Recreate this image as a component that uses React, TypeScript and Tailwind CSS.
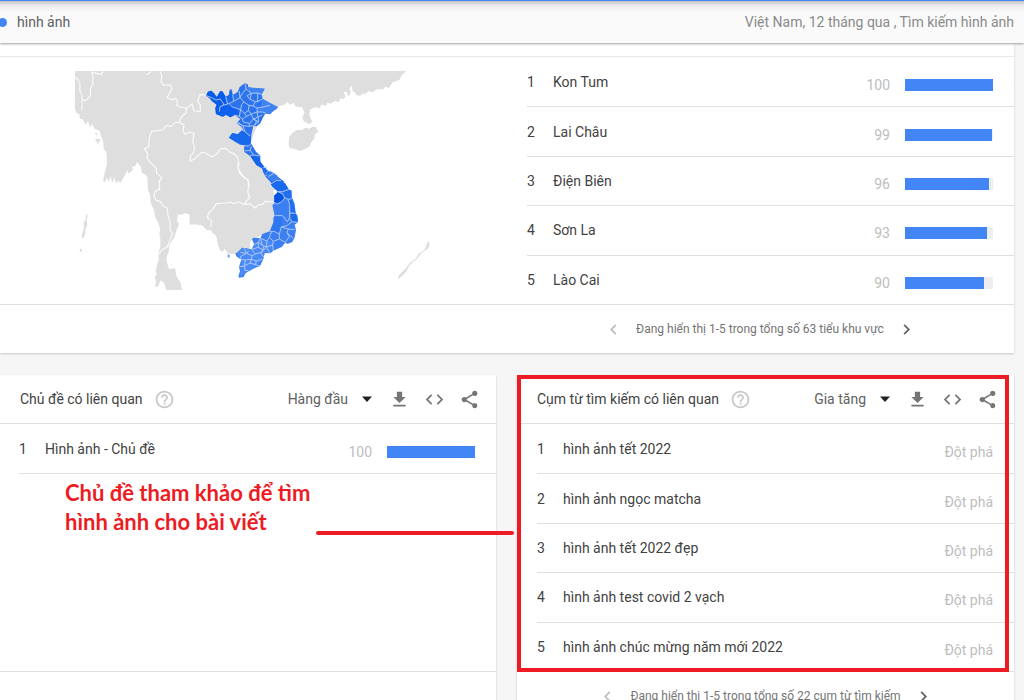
import { useId, type ReactNode } from "react";

const subregions = [
  { name: "Kon Tum", value: 100 },
  { name: "Lai Châu", value: 99 },
  { name: "Điện Biên", value: 96 },
  { name: "Sơn La", value: 93 },
  { name: "Lào Cai", value: 90 },
];

const topics = [{ name: "Hình ảnh - Chủ đề", value: 100 }];

const queries = [
  "hình ảnh tết 2022",
  "hình ảnh ngọc matcha",
  "hình ảnh tết 2022 đẹp",
  "hình ảnh test covid 2 vạch",
  "hình ảnh chúc mừng năm mới 2022",
];

const Icon = ({ d, className = "size-[21px]" }: { d: string; className?: string }) => (
  <svg viewBox="0 0 24 24" className={className} fill="currentColor" aria-hidden="true">
    <path d={d} />
  </svg>
);

const icons = {
  help: "M11 18h2v-2h-2v2zm1-16C6.48 2 2 6.48 2 12s4.48 10 10 10 10-4.48 10-10S17.52 2 12 2zm0 18c-4.41 0-8-3.59-8-8s3.59-8 8-8 8 3.59 8 8-3.59 8-8 8zm0-14c-2.21 0-4 1.79-4 4h2c0-1.1.9-2 2-2s2 .9 2 2c0 2-3 1.75-3 5h2c0-2.25 3-2.5 3-5 0-2.21-1.79-4-4-4z",
  caret: "M7 9.5l5 5.5 5-5.5z",
  download: "M19 9h-4V3H9v6H5l7 7 7-7zM5 18v2h14v-2H5z",
  code: "M9.4 16.6L4.8 12l4.6-4.6L8 6l-6 6 6 6 1.4-1.4zm5.2 0l4.6-4.6-4.6-4.6L16 6l6 6-6 6-1.4-1.4z",
  share:
    "M18 16.08c-.76 0-1.44.3-1.96.77L8.91 12.7c.05-.23.09-.46.09-.7s-.04-.47-.09-.7l7.05-4.11c.54.5 1.25.81 2.04.81 1.66 0 3-1.34 3-3s-1.34-3-3-3-3 1.34-3 3c0 .24.04.47.09.7L8.04 9.81C7.5 9.31 6.79 9 6 9c-1.66 0-3 1.34-3 3s1.34 3 3 3c.79 0 1.5-.31 2.04-.81l7.12 4.16c-.05.21-.08.43-.08.65 0 1.61 1.31 2.92 2.92 2.92 1.61 0 2.92-1.31 2.92-2.92s-1.31-2.92-2.92-2.92z",
  prev: "M15.41 7.41L14 6l-6 6 6 6 1.41-1.41L10.83 12z",
  next: "M10 6L8.59 7.41 13.17 12l-4.58 4.59L10 18l6-6z",
};

// Geo map: neighbours in grey, provinces shaded by interest
const VietnamMap = () => (
  <svg
    viewBox="0 0 1065 657"
    className="h-[219px] w-[355px]"
    role="img"
    aria-label="Việt Nam"
    strokeLinejoin="round"
  >
    <g fill="#dedede">
      {/* Myanmar, Laos, north Thailand */}
      <path
        transform="translate(-45 -33)"
        d="M45 33H571V391H267L266 362L258 345L246 338L242 320L231 306L226 318L216 320L219 330L205 341L203 330L192 350L182 368L174 362L168 371L163 350L158 369L151 349L146 366L140 352L136 367L129 362L134 338L141 312L140 280L131 265L129 243L122 225L118 211L104 207L96 191L90 204L84 183L78 194L68 178L60 176L58 162L50 160L45 148ZM103 219L115 222L110 226ZM105 236L122 238L114 253Z"
      />
      {/* South China coast with Leizhou and Hainan */}
      <path
        transform="translate(495 -33)"
        d="M-2 33H498L484 47L478 60L458 67L447 84L436 80L430 88L411 88L398 97L385 94L376 102L366 101L361 107L349 106L344 97L338 94L334 77L329 84L332 98L325 110L320 95L311 96L317 110L309 118L301 114L297 127L286 122L272 131L262 128L258 137L244 134L239 145L226 142L211 148L208 162L211 174L217 185L209 193L191 184L187 171L194 158L186 142L168 140L160 129L150 134L142 126L132 135L116 139L76 164L50 200L30 250L64 315L144 391H-2ZM147 232L158 218L172 209L184 211L196 203L208 206L218 200L228 201L235 216L226 221L222 237L213 248L210 258L196 267L179 273L165 267L150 265L146 256Z"
      />
      {/* Thailand gulf and the Malay peninsula */}
      <path
        transform="translate(-45 327)"
        d="M262 -2H571V205L553 204L547 214L526 221L510 213L497 214L493 197L483 205L475 200L470 175L469 163L459 160L455 149L441 151L426 136L404 133L389 134L388 103L373 100L366 104L353 104L351 123L357 132L349 153L343 172L328 195L326 216L319 233L322 251L327 267L345 265L350 290L362 308L366 330H318L315 313L306 303L300 302L295 319L286 322L288 302L284 292L290 283L287 271L296 240L296 220L301 199L301 178L298 158L301 150L296 131L285 110L282 91L272 68L270 43L264 30Z"
      />
      <path
        transform="translate(405 297)"
        d="M-2 -2H152L186 45L197 92L190 180L130 207L80 251L53 251L47 232L38 246L29 240L25 226L20 199L8 189L-2 175Z"
      />
      {/* Andaman islands and Palawan */}
      <path
        transform="translate(-45 327)"
        d="M78 102L83 107L80 120L82 134L76 149L75 164L70 175L65 172L68 155L72 144L71 128L77 118ZM60 207L66 206L65 216L59 217Z"
      />
      <path d="M1060 508L1064 522L1058 534L1040 545L1028 562L1013 574L1003 584L993 603L968 626L972 612L993 591L1005 575L1023 562L1030 549L1048 537Z" />
    </g>

    {/* National borders */}
    <g fill="none" stroke="#fafafa" strokeWidth="3.5">
      <path
        transform="translate(-45 -33)"
        d="M45 50L53 58L60 72L59 91L66 104L66 150M95 34L99 50L98 72L91 88L92 106L78 122L66 119M98 38L124 44L130 34M260 44L275 34M301 34L305 49L303 66L312 76L332 75L336 86L327 102L321 113L336 119L346 116L353 124L350 136L360 141L380 145L396 131L402 153L421 154L421 136L413 123L420 104L439 105M380 145L378 160L364 170L357 187L345 188L333 199L318 197L309 210L275 214L268 233L266 261L253 266L263 280L261 294L272 308L289 326L290 340L306 353L298 364L299 391M357 187L372 195L369 213L376 223L387 216L402 220L398 245L404 263L401 276L392 288L390 304L405 296L424 277L437 279L455 291L473 280L480 267L496 265L511 277L522 281L533 292L537 313L533 324L548 347L564 360L568 378"
      />
      <path
        transform="translate(-45 327)"
        d="M299 0L298 27L284 36L282 46L288 61L302 65L307 76L321 84L325 111L331 128L330 148L337 163L328 185L322 200L305 210L298 222"
      />
      <path
        transform="translate(405 297)"
        d="M83 -20L88 9L99 20L114 30L116 50L113 66L119 84L108 94L105 104L84 96L72 101L59 96L49 99L20 101L8 118L-4 129L-8 142L5 154L2 172M105 104L120 101L135 114L148 103L158 104L165 94L190 96"
      />
    </g>

    {/* Northern provinces */}
    <g transform="translate(345 12)">
      <path
        fill="#2b74ee"
        d="M48 62L54 50L64 47L73 55L80 66L88 62L90 49L97 49L107 65L117 60L120 43L126 44L128 60L143 51L149 36L165 24L173 28L175 37L187 39L196 46L203 40L224 41L215 58L218 72L233 80L240 91L264 96L257 104L243 109L240 118L226 114L218 130L211 145L200 154L190 152L184 180L183 205L198 230L211 242L211 260L233 289L257 300L285 322L244 324L225 303L216 280L199 270L180 243L162 230L163 211L150 209L137 201L117 188L127 174L143 178L160 170L157 158L140 144L151 132L134 120L121 127L108 119L99 125L78 117L76 99L80 89L65 79L59 70Z"
      />
      <path fill="#0b5beb" d="M48 62L54 50L64 47L80 66L90 49L97 49L107 65L111 85L99 91L90 112L98 125L78 117L76 99L80 89L59 70Z" />
      <path fill="#0f60ec" d="M99 91L119 88L127 96L143 101L148 124L134 120L121 127L108 119L99 125L88 110Z" />
      <path fill="#186aec" d="M107 65L117 60L120 43L128 60L131 79L113 87Z" />
      <path fill="#1968ec" d="M117 188L127 174L143 178L156 165L182 185L183 205L163 211L137 201Z" />
      <path fill="#1665ec" d="M180 240L209 244L211 260L233 289L222 296L216 280L199 270Z" />
      <path fill="#4283f2" d="M165 24L175 37L224 41L215 58L180 56ZM218 72L264 96L240 118L200 110L213 95ZM239 288L264 303L244 316L232 306Z" />
      <path
        fill="none"
        stroke="#bcd0f7"
        strokeWidth="2.6"
        d="M48 62L65 68L78 75L91 72L101 87L99 91L90 95L88 110M107 65L113 87L99 91M113 87L131 79L128 60M131 79L150 68L162 81L155 88L152 104L127 96L119 88M150 68L148 48M165 24L168 42L156 57L150 68M168 42L184 55L180 73L196 80L189 93L177 91L162 81M180 73L171 62L184 55L203 54L215 58M203 54L203 80L196 80M203 80L218 72M189 93L202 99L219 96L240 91M202 99L201 111L218 111L226 114M177 91L175 107L184 117L201 111M175 107L163 115L152 104L148 124L134 120M163 115L170 124L184 117L190 132L204 126L201 111M170 124L157 132L148 124M157 132L160 141L179 145L190 132L206 141L204 126L217 120M179 145L177 154L157 152L140 139M177 154L190 152L206 141M190 132L199 137L196 149M141 142L160 154L164 169L180 183M164 169L156 165M161 211L175 214L183 205M163 228L181 226L190 240L209 243M181 226L184 213M180 243L190 240M216 280L229 276L233 289M225 303L236 298L241 287L257 300M236 298L247 315L264 307"
      />
    </g>

    {/* Central coast and Mekong delta */}
    <g transform="translate(405 297)">
      <path
        fill="#3b7ff1"
        d="M154 -8L175 3L192 9L206 25L213 32L226 41L236 58L244 62L245 80L254 101L257 130L263 137L264 157L254 164L258 180L254 202L247 216L234 221L225 219L215 231L190 242L181 250L164 249L159 269L150 288L134 294L115 302L107 309L101 321L88 323L85 319L90 304L87 290L94 269L79 259L76 250L91 247L96 233L125 238L133 224L126 208L130 203L151 205L157 192L179 184L190 157L190 143L194 137L187 106L196 97L192 77L202 68L204 59L189 52L182 42L188 34L171 18Z"
      />
      <path fill="#4a8af4" d="M79 250L96 233L125 238L135 216L152 211L190 214L188 240L164 249L159 269L134 294L107 309L88 323L94 269Z" />
      <path fill="#196aec" d="M182 42L189 33L210 31L226 41L236 58L218 65L204 65L189 52ZM154 -8L175 3L178 12L168 10ZM244 132L257 130L264 157L246 154Z" />
      <path fill="#0454e6" d="M193 77L204 65L218 72L224 84L215 95L201 102L192 97Z" />
      <path fill="#216eee" d="M218 65L244 60L245 86L230 88L222 80ZM235 88L247 87L257 130L243 130Z" />
      <path fill="#2f77ee" d="M194 137L218 137L216 160L208 192L192 184L181 185L192 160Z" />
      <path fill="#5b95f5" d="M53 254L59 254L58 263L53 262Z" />
      <path
        fill="none"
        stroke="#bcd0f7"
        strokeWidth="2.6"
        d="M168 10L175 3M175 20L193 9M182 42L200 31L213 32M204 65L218 65L236 58M204 65L218 72L224 84L215 95L201 102L192 97M222 82L234 88L246 86M234 88L239 104L239 129L257 130M239 129L238 145L232 155L218 137L196 137M238 145L246 155L264 157M246 155L231 167L214 171L208 192L192 184L179 184M214 171L235 177L254 179M235 177L231 188L249 205M231 188L238 200L226 217M208 192L208 207L226 217M208 207L190 214L178 202L185 184M190 214L188 225L190 242M178 202L171 213L151 205M171 213L169 231L188 225M169 231L179 249M151 205L145 217L158 226L169 231L161 241L145 232L145 217L133 224M145 232L125 238L136 252L151 248L161 241M151 248L162 262M136 252L126 257L109 250L103 235M109 250L91 260L94 269M126 257L124 268L106 270L94 269M124 268L139 273L157 267M139 273L136 284L150 288M106 270L103 288L120 279L136 284M103 288L105 301L115 302M103 288L88 290M120 279L124 268M91 247L109 250M116 242L110 250M157 226L152 205M162 229L154 250"
      />
    </g>
  </svg>
);

const InterestBar = ({ value }: { value: number }) => (
  <div className="flex items-center gap-[15px] pt-1.5">
    <span className="text-[#bdbdbd]">{value}</span>
    <div className="h-3 w-[88px] bg-[#eeeeee]">
      <div className="h-full bg-[#4285f4]" style={{ width: `${value}%` }} />
    </div>
  </div>
);

const RankedRow = ({ rank, name, children }: { rank: number; name: string; children: ReactNode }) => (
  <li className="flex items-center border-b border-[#e0e0e0] pr-[21px]">
    <span className="w-[26px]">{rank}</span>
    <span className="flex-1">{name}</span>
    {children}
  </li>
);

const Pager = ({ label }: { label: string }) => (
  <div className="flex h-12 items-center justify-center gap-3 text-xs text-[#757575]">
    <button type="button" aria-label="Trang trước" disabled className="text-[#bdbdbd]">
      <Icon d={icons.prev} />
    </button>
    <span>{label}</span>
    <button type="button" aria-label="Trang sau" className="text-[#616161]">
      <Icon d={icons.next} />
    </button>
  </div>
);

const WidgetHeader = ({ title, options }: { title: string; options: string[] }) => {
  const id = useId();

  return (
    <div className="flex h-[49px] items-center border-b border-[#e0e0e0] pr-4 pl-5">
      <h2>
        <label htmlFor={id}>{title}</label>
      </h2>
      <button type="button" aria-label="Trợ giúp" className="ml-[11px] text-[#c8c8c8]">
        <Icon d={icons.help} />
      </button>
      <div className="relative ml-auto">
        <select id={id} className="field-sizing-content appearance-none pr-[31px] text-[#616161] outline-none">
          {options.map((option) => (
            <option key={option}>{option}</option>
          ))}
        </select>
        <span className="pointer-events-none absolute inset-y-0 right-0 flex items-center text-[#212121]">
          <Icon d={icons.caret} className="size-6" />
        </span>
      </div>
      <div className="ml-2.5 flex gap-3.5 text-[#757575]">
        <button type="button" aria-label="Tải xuống">
          <Icon d={icons.download} />
        </button>
        <button type="button" aria-label="Nhúng">
          <Icon d={icons.code} />
        </button>
        <button type="button" aria-label="Chia sẻ">
          <Icon d={icons.share} />
        </button>
      </div>
    </div>
  );
};

const App = () => {
  return (
    <div className="h-screen overflow-hidden bg-[#f6f6f6] font-[Roboto,sans-serif] text-sm text-[#424242]">
      {/* Sticky search summary */}
      <header className="relative flex h-[43px] items-center justify-between border-t border-[#4285f4] bg-linear-to-b from-[#c4c4c4] via-[#eeeeee] via-[5px] to-[#fafafa] to-[12px] pr-2.5 shadow-[0_1px_2px_#a0a0a0]">
        <div className="flex items-center gap-2.5 text-[#616161]">
          <span className="-ml-0.5 size-[9px] rounded-full bg-[#4285f4]" />
          hình ảnh
        </div>
        <p className="text-[#8a8a8a]">Việt Nam, 12 tháng qua , Tìm kiếm hình ảnh</p>
      </header>

      <main className="pr-2.5">
        {/* Interest by subregion */}
        <section className="bg-white pt-[13px] shadow-[0_1px_2px_#c8c8c8]">
          <div className="flex border-t border-[#e8e8e8]">
            <div className="flex-1 pt-3.5 pl-[75px]">
              <VietnamMap />
            </div>
            <ol className="grid h-[248px] w-[487px] auto-rows-fr pt-px">
              {subregions.map((region, index) => (
                <RankedRow key={region.name} rank={index + 1} name={region.name}>
                  <InterestBar value={region.value} />
                </RankedRow>
              ))}
            </ol>
          </div>
          <div className="-mt-px border-t border-[#e0e0e0] pl-[506px]">
            <Pager label="Đang hiển thị 1-5 trong tổng số 63 tiểu khu vực" />
          </div>
        </section>

        <div className="relative mt-[22px] grid grid-cols-[496fr_497fr] gap-[21px]">
          {/* Related topics */}
          <section className="relative bg-white shadow-[0_1px_2px_#c8c8c8]">
            <WidgetHeader title="Chủ đề có liên quan" options={["Hàng đầu", "Gia tăng"]} />
            <ol className="grid h-[248px] grid-rows-5 border-b border-[#e0e0e0] pt-px pl-[19px]">
              {topics.map((topic, index) => (
                <RankedRow key={topic.name} rank={index + 1} name={topic.name}>
                  <InterestBar value={topic.value} />
                </RankedRow>
              ))}
            </ol>
            <p className="absolute top-[103px] left-[65px] w-[270px] font-[Lato,sans-serif] text-[22px] leading-[29px] font-bold text-[#ed1c24]">
              Chủ đề tham khảo để tìm hình ảnh cho bài viết
            </p>
          </section>

          {/* Related queries */}
          <section className="relative bg-white shadow-[0_1px_2px_#c8c8c8]">
            <WidgetHeader title="Cụm từ tìm kiếm có liên quan" options={["Gia tăng", "Hàng đầu"]} />
            <ol className="grid h-[248px] auto-rows-fr pt-px pl-5">
              {queries.map((query, index) => (
                <RankedRow key={query} rank={index + 1} name={query}>
                  <span className="pt-1.5 text-[#bdbdbd]">Đột phá</span>
                </RankedRow>
              ))}
            </ol>
            <Pager label="Đang hiển thị 1-5 trong tổng số 22 cụm từ tìm kiếm" />
            <div className="pointer-events-none absolute top-0 right-[5px] left-0 h-[297px] border-4 border-[#ed1c24]" />
          </section>

          {/* Pointer from the note to the framed card */}
          <div className="absolute top-[156px] left-[316px] h-1 w-[198px] rounded-full bg-[#ed1c24]" />
        </div>
      </main>
    </div>
  );
};

export default App;
